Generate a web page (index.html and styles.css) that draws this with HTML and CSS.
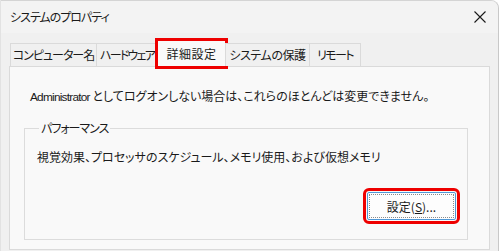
FILE: index.html
```html
<!DOCTYPE html>
<html lang="ja">
<head>
<meta charset="utf-8">
<link rel="stylesheet" href="styles.css">
</head>
<body>
<div class="window">
  <div class="titlebar">
    <span class="title">システムのプロパティ</span>
    <svg class="close" width="12" height="12" viewBox="0 0 12 12"><path d="M0.5 0.5L11.5 11.5M11.5 0.5L0.5 11.5" stroke="#1a1a1a" stroke-width="1.1" fill="none"/></svg>
  </div>
  <div class="content">
    <div class="tabs">
      <div class="tab t1">コンピューター名</div>
      <div class="tab t2">ハードウェア</div>
      <div class="tab t3 selected">詳細設定</div>
      <div class="tab t4">システムの保護</div>
      <div class="tab t5">リモート</div>
    </div>
    <div class="panel">
      <p class="info"><span class="latin">Administrator</span> としてログオンしない場合は、これらのほとんどは変更できません。</p>
      <fieldset class="group">
        <legend>パフォーマンス</legend>
        <p class="desc">視覚効果、プロセッサのスケジュール、メモリ使用、および仮想メモリ</p>
        <div class="actions">
          <button class="btn">設定(<u>S</u>)...</button>
        </div>
      </fieldset>
    </div>
  </div>
</div>
</body>
</html>
```

FILE: styles.css
```css
html, body {
  margin: 0;
  padding: 0;
  background: #ffffff;
}
body {
  font-family: "Noto Sans CJK JP", "Noto Sans", sans-serif;
  font-size: 12px;
  font-feature-settings: "palt";
  color: #1a1a1a;
}
.window {
  width: 499px;
  height: 251px;
  background: #f0f0f0;
  border-top: 1px solid #d4d4d4;
  border-right: 1px solid #c8c8c8;
  border-left: 1px solid #e2e2e2;
  border-top-right-radius: 8px;
  box-sizing: border-box;
  display: flex;
  flex-direction: column;
  overflow: hidden;
}
.titlebar {
  height: 32px;
  flex: none;
  background: #f3f3f3;
  display: flex;
  align-items: center;
  justify-content: space-between;
  padding: 0 12px 0 9px;
}
.title {
  font-size: 12px;
  line-height: 16px;
  letter-spacing: -1px;
}
.close {
  display: block;
  margin-top: -1px;
}
.content {
  padding: 7px 8px 0 8px;
  display: flex;
  flex-direction: column;
}
.tabs {
  display: flex;
  align-items: flex-end;
  height: 26px;
  padding-left: 1px;
  position: relative;
  z-index: 1;
}
.tab {
  height: 23px;
  line-height: 22px;
  text-align: center;
  border: 1px solid #dadada;
  border-bottom: none;
  margin-right: -1px;
  background: #f0f0f0;
  box-sizing: border-box;
  letter-spacing: -1px;
  white-space: nowrap;
}
.t1 { width: 87px; }
.t2 { width: 62px; letter-spacing: -1.8px; }
.t3 { width: 69px; letter-spacing: 0.5px; }
.t4 { width: 85px; letter-spacing: -0.4px; }
.t5 { width: 52px; letter-spacing: -1.6px; }
.tab.selected {
  height: 27px;
  margin-bottom: -1px;
  line-height: 25px;
  background: #f9f9f9;
  outline: 3px solid #ee0000;
  outline-offset: -1px;
}
.panel {
  height: 184px;
  box-sizing: border-box;
  background: #f9f9f9;
  border: 1px solid #dadada;
  padding: 21px 21px 0 14px;
}
.info {
  margin: 0 0 16px 6px;
  line-height: 16px;
  white-space: nowrap;
}
.latin {
  font-family: "Liberation Sans", Arial, sans-serif;
  font-size: 11.8px;
  letter-spacing: -0.75px;
}
.group {
  margin: 0;
  border: 1px solid #dcdcdc;
  padding: 14px 11px 0 12px;
  height: 119px;
  box-sizing: border-box;
}
.group legend {
  padding: 0 2px;
  margin-left: 2px;
  line-height: 14px;
  letter-spacing: -1px;
}
.desc {
  margin: 0;
  line-height: 16px;
  white-space: nowrap;
}
.actions {
  display: flex;
  justify-content: flex-end;
  padding-top: 27px;
}
.btn {
  position: relative;
  font: inherit;
  font-size: 12px;
  color: #1a1a1a;
  width: 89px;
  height: 28px;
  background: #fdfdfd;
  border: 1px solid #4f97d6;
  border-radius: 2px;
  outline: 3px solid #ee0000;
  outline-offset: 1px;
  padding: 0;
}
.btn::after {
  content: "";
  position: absolute;
  inset: 1px;
  border: 1px dotted #8a8a8a;
}
```
